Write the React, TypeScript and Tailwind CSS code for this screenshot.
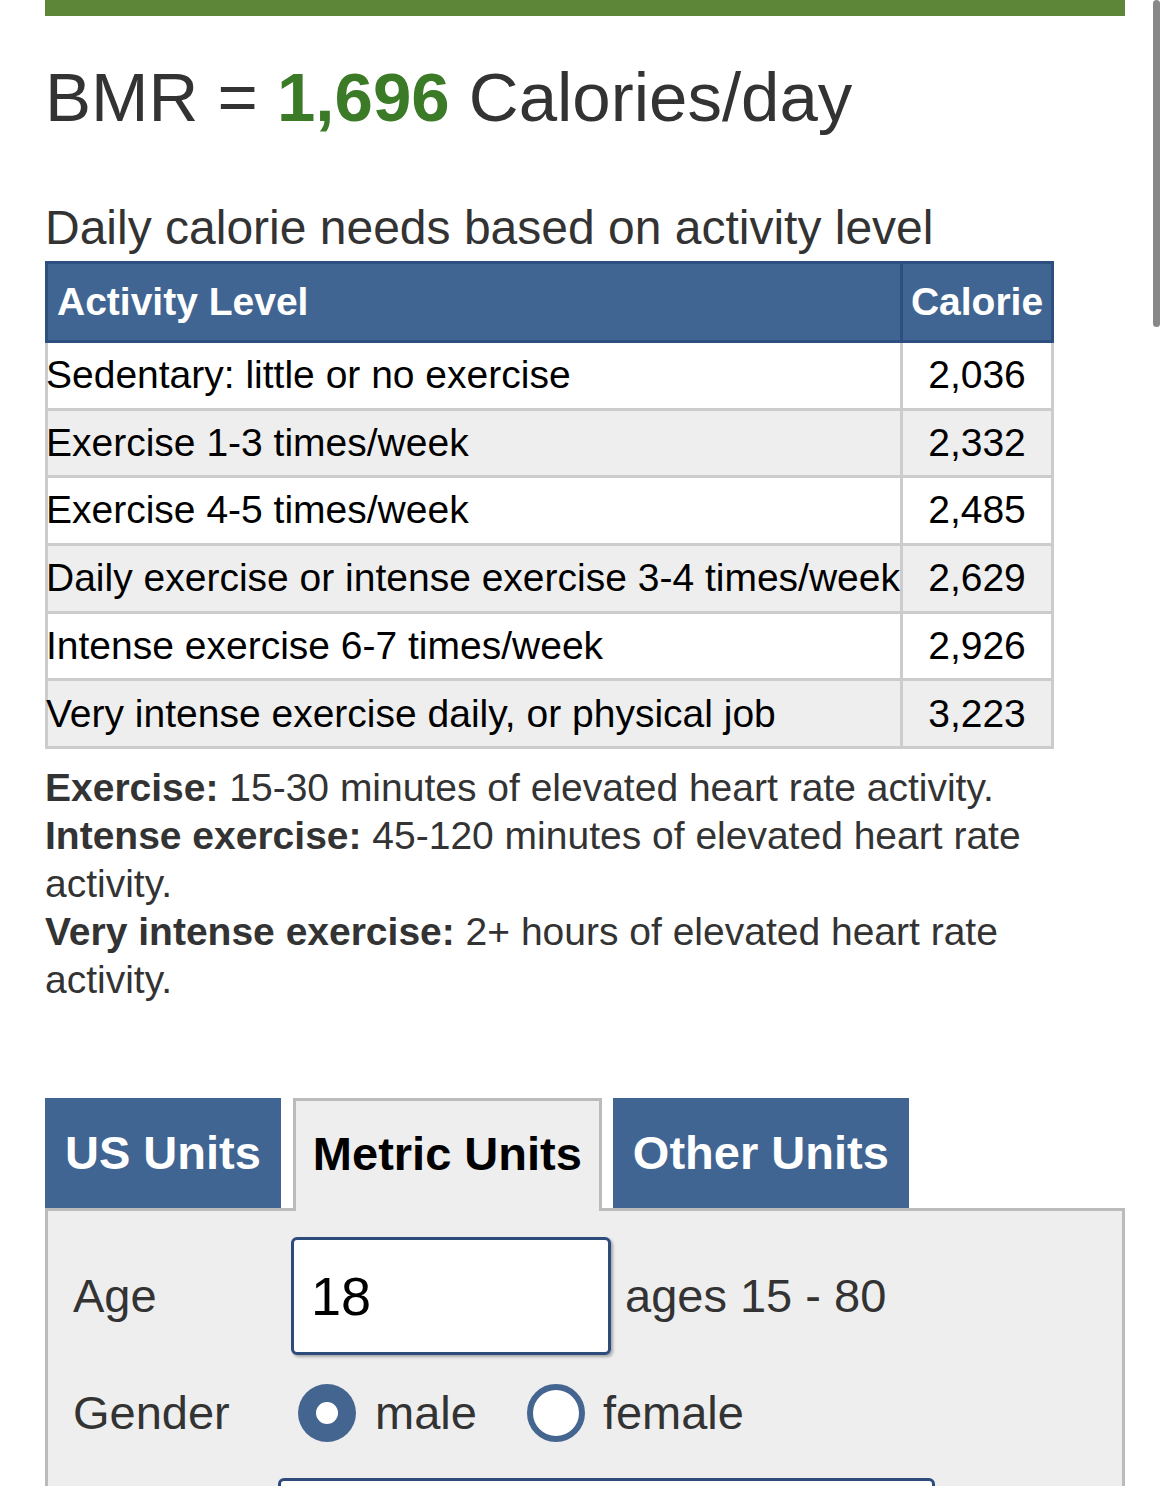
const rows: [string, string][] = [
  ['Sedentary: little or no exercise', '2,036'],
  ['Exercise 1-3 times/week', '2,332'],
  ['Exercise 4-5 times/week', '2,485'],
  ['Daily exercise or intense exercise 3-4 times/week', '2,629'],
  ['Intense exercise 6-7 times/week', '2,926'],
  ['Very intense exercise daily, or physical job', '3,223'],
];

function Radio({ checked }: { checked: boolean }) {
  return checked ? (
    <span className="flex h-[58px] w-[58px] items-center justify-center rounded-full bg-[#44658f]">
      <span className="h-[22px] w-[22px] rounded-full bg-white" />
    </span>
  ) : (
    <span className="h-[58px] w-[58px] rounded-full border-[6px] border-[#44658f] bg-white" />
  );
}

export default function App() {
  return (
    <div className="relative h-[1486px] overflow-hidden bg-white font-['Liberation_Sans',Arial,sans-serif]">
      <div className="w-[1125px] pl-[45px]">
        <div className="h-4 bg-[#5e8639]" />

        <h2 className="mt-[42px] text-[69px] leading-[80px] text-[#333]">
          BMR = <span className="font-bold text-[#3b7a26]">1,696</span> Calories/day
        </h2>

        <p className="mt-[62px] text-[48px] leading-[56px] text-[#333]">
          Daily calorie needs based on activity level
        </p>

        <table className="mt-[5px] w-[1009px] border-collapse text-[39px]">
          <thead>
            <tr className="bg-[#416592] text-white">
              <th className="h-[79px] border-[3px] border-[#2c4f80] pl-[9px] text-left font-bold">
                Activity Level
              </th>
              <th className="w-[152px] border-[3px] border-[#2c4f80] text-center font-bold">Calorie</th>
            </tr>
          </thead>
          <tbody>
            {rows.map(([label, cal], i) => (
              <tr key={label} className={i % 2 ? 'bg-[#eee]' : 'bg-white'}>
                <td className="h-[67.7px] whitespace-nowrap border-[3px] border-[#ccc] p-0 indent-[-2px] text-black">
                  {label}
                </td>
                <td className="border-[3px] border-[#ccc] p-0 text-center text-black">{cal}</td>
              </tr>
            ))}
          </tbody>
        </table>

        <div className="mt-[15px] text-[39px] leading-[48px] text-[#333]">
          <p>
            <b>Exercise:</b> 15-30 minutes of elevated heart rate activity.
          </p>
          <p>
            <b>Intense exercise:</b> 45-120 minutes of elevated heart rate activity.
          </p>
          <p>
            <b>Very intense exercise:</b> 2+ hours of elevated heart rate activity.
          </p>
        </div>

        <div className="mt-[94px] flex items-start text-[47px] font-bold">
          <div className="flex h-[110px] items-center bg-[#416592] px-5 text-white">US Units</div>
          <div className="relative z-10 -mb-[3px] ml-3 flex h-[113px] items-center border-[3px] border-b-0 border-[#bbb] bg-[#eee] px-[17px] pb-[3px] text-black">
            Metric Units
          </div>
          <div className="ml-[11px] flex h-[110px] items-center bg-[#416592] px-5 text-white">Other Units</div>
        </div>

        <div className="w-[1080px] border-[3px] border-[#bbb] bg-[#eee] pl-[25px] pt-[26px] text-[47px] text-[#333]">
          <div className="flex h-[118px] items-center">
            <span className="w-[218px]">Age</span>
            <div className="flex h-[118px] w-[320px] items-center rounded-[6px] border-[3px] border-[#2d4c7c] bg-white pl-[17px] text-[54px] text-black shadow-[2px_2px_3px_rgba(0,0,0,0.3)]">
              18
            </div>
            <span className="ml-[14px]">ages 15 - 80</span>
          </div>

          <div className="mt-[28px] flex h-[60px] items-center">
            <span className="w-[225px]">Gender</span>
            <Radio checked />
            <span className="ml-[19px]">male</span>
            <span className="ml-[50px] flex">
              <Radio checked={false} />
            </span>
            <span className="ml-[18px]">female</span>
          </div>

          <div className="ml-[205px] mt-[35px] h-[100px] w-[657px] rounded-[6px] border-[3px] border-[#2d4c7c] bg-white" />
        </div>
      </div>

      <div className="absolute right-[10px] top-0 h-[327px] w-[7px] rounded-full bg-[#888]" />
    </div>
  );
}
